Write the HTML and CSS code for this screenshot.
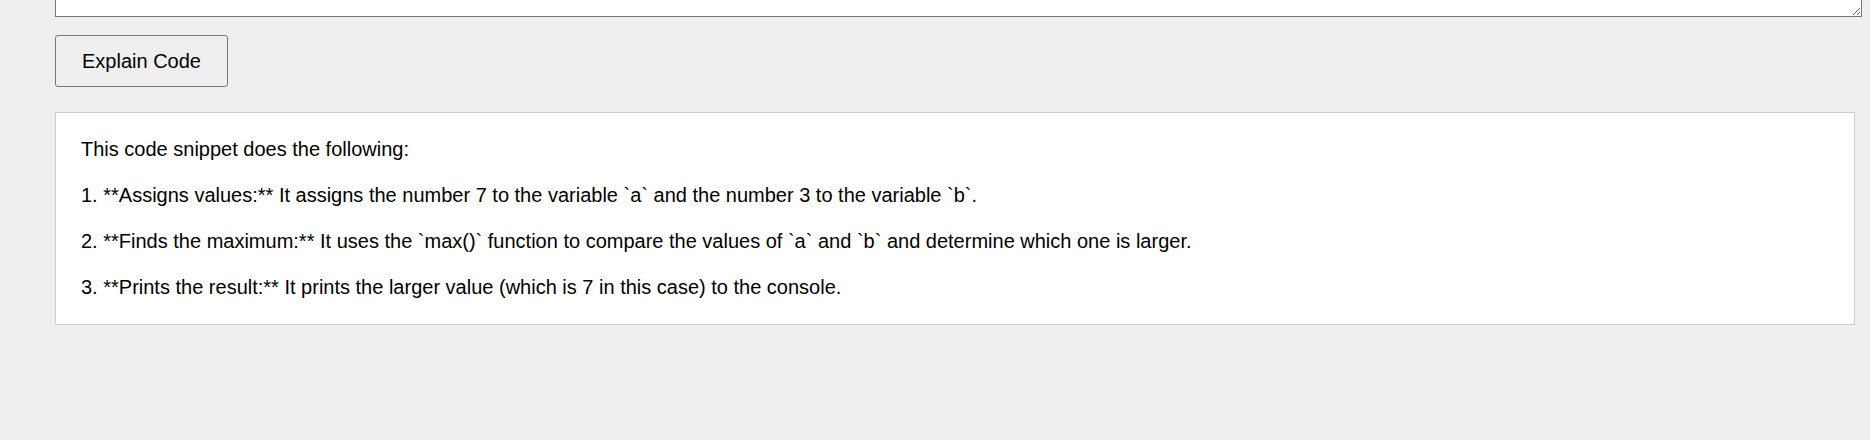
FILE: index.html
```html
<!DOCTYPE html>
<html lang="en">
<head>
<meta charset="utf-8">
<title>Code Explainer</title>
<link rel="stylesheet" href="styles.css">
</head>
<body>
<main class="page">
  <textarea class="code-input">a = 7
b = 3
print(max(a, b))</textarea>
  <button class="explain-btn" type="button">Explain Code</button>
  <div class="result">This code snippet does the following:

1. **Assigns values:** It assigns the number 7 to the variable `a` and the number 3 to the variable `b`.

2. **Finds the maximum:** It uses the `max()` function to compare the values of `a` and `b` and determine which one is larger.

3. **Prints the result:** It prints the larger value (which is 7 in this case) to the console.</div>
</main>
</body>
</html>
```

FILE: styles.css
```css
html, body {
  margin: 0;
  padding: 0;
  background: #efefef;
}

body {
  font-family: "Liberation Sans", Arial, sans-serif;
  color: #000;
}

.page {
  display: flex;
  flex-direction: column;
  align-items: flex-start;
  padding: 0 15px 0 55px;
}

.code-input {
  display: block;
  box-sizing: border-box;
  width: calc(100% + 7px);
  height: 200px;
  margin: -183px 0 0 0;
  border: 1px solid #767676;
  border-radius: 0;
  background: #fff;
  font-family: "Liberation Mono", monospace;
  font-size: 16px;
  color: #000;
}

.explain-btn {
  margin-top: 18px;
  box-sizing: border-box;
  height: 52px;
  width: 173px;
  padding: 14px 0 13px 0;
  border: 1px solid #767676;
  border-radius: 3px;
  background: #efefef;
  font-family: "Liberation Sans", Arial, sans-serif;
  font-size: 20px;
  line-height: 23px;
  color: #000;
  text-align: center;
}

.result {
  align-self: stretch;
  margin-top: 25px;
  padding: 25px;
  border: 1px solid #cccccc;
  background: #fff;
  font-size: 20px;
  line-height: 23px;
  white-space: pre-wrap;
}
```
